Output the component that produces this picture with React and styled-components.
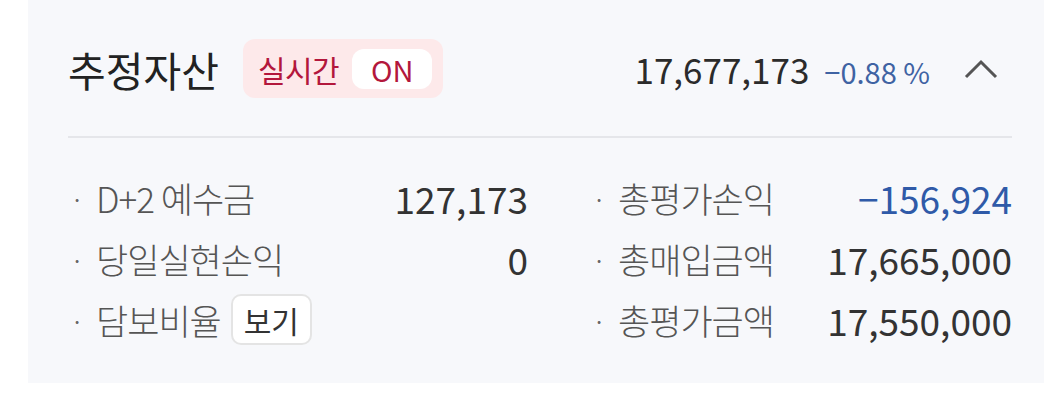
import React from "react";
import styled, { createGlobalStyle } from "styled-components";

const GlobalStyle = createGlobalStyle`
    body {
        margin: 0;
        background: #ffffff;
        font-family: "Noto Sans CJK KR", "Noto Sans", sans-serif;
    }
`;

const Panel = styled.section`
    margin-left: 28px;
    width: 1016px;
    height: 383px;
    box-sizing: border-box;
    padding: 39px 32px 0 40px;
    background: #f7f8fb;
`;

const Header = styled.div`
    display: flex;
    align-items: center;
    height: 59px;
`;

const Title = styled.h2`
    margin: 0 24px 0 0;
    font-size: 41px;
    font-weight: 400;
    color: #222222;
    letter-spacing: 0;
`;

const Badge = styled.div`
    display: flex;
    align-items: center;
    height: 59px;
    box-sizing: border-box;
    padding: 0 11px 0 15px;
    border-radius: 12px;
    background: #fde9ea;
    color: #b3173c;
    font-size: 30px;
`;

const BadgeLabel = styled.span`
    margin-right: 13px;
    letter-spacing: -0.5px;
`;

const OnPill = styled.span`
    display: flex;
    align-items: center;
    justify-content: center;
    width: 80px;
    height: 40px;
    border-radius: 12px;
    background: #ffffff;
    font-size: 29px;
`;

const Total = styled.div`
    margin-left: auto;
    display: flex;
    align-items: baseline;
    gap: 15px;
`;

const TotalValue = styled.span`
    font-size: 35px;
    color: #2b2b2b;
`;

const Rate = styled.span`
    font-size: 29px;
    color: #3f63a3;
`;

const Toggle = styled.button`
    margin-left: 34px;
    margin-right: 14px;
    padding: 0;
    border: 0;
    background: none;
    display: flex;
    align-items: center;
`;

const Divider = styled.hr`
    margin: 38px 0 29px;
    border: 0;
    height: 2px;
    background: #e5e6ea;
`;

const Grid = styled.div`
    display: grid;
    grid-template-columns: 460px 1fr;
    column-gap: 62px;
    grid-auto-rows: 61px;
`;

const Item = styled.div`
    display: flex;
    align-items: center;
`;

const Bullet = styled.span`
    width: 28px;
    padding-left: 3px;
    box-sizing: border-box;
    font-size: 22px;
    color: #666666;
`;

const Label = styled.span`
    font-size: 35px;
    font-weight: 300;
    color: #555555;
    letter-spacing: -1px;
`;

const Value = styled.span`
    margin-left: auto;
    font-size: 37px;
    color: ${(p) => (p.$negative ? "#2f5aa8" : "#333333")};
`;

const ViewButton = styled.button`
    margin-left: 10px;
    width: 81px;
    height: 51px;
    box-sizing: border-box;
    border: 2px solid #e4e4e4;
    border-radius: 10px;
    background: #ffffff;
    font-family: inherit;
    font-size: 30px;
    color: #333333;
    padding: 0;
`;

const rows = [
    [{ label: "D+2 예수금", value: "127,173" }, { label: "총평가손익", value: "−156,924", negative: true }],
    [{ label: "당일실현손익", value: "0" }, { label: "총매입금액", value: "17,665,000" }],
    [{ label: "담보비율", button: "보기" }, { label: "총평가금액", value: "17,550,000" }],
];

export default function App() {
    return (
        <>
            <GlobalStyle />
            <Panel>
                <Header>
                    <Title>추정자산</Title>
                    <Badge>
                        <BadgeLabel>실시간</BadgeLabel>
                        <OnPill>ON</OnPill>
                    </Badge>
                    <Total>
                        <TotalValue>17,677,173</TotalValue>
                        <Rate>−0.88 %</Rate>
                    </Total>
                    <Toggle aria-label="접기">
                        <svg width="34" height="20" viewBox="0 0 34 20">
                            <path d="M2 18 L17 3 L32 18" fill="none" stroke="#555" strokeWidth="3" />
                        </svg>
                    </Toggle>
                </Header>
                <Divider />
                <Grid>
                    {rows.flat().map((item, idx) => (
                        <Item key={idx}>
                            <Bullet>·</Bullet>
                            <Label>{item.label}</Label>
                            {item.button && <ViewButton>{item.button}</ViewButton>}
                            {item.value && <Value $negative={item.negative}>{item.value}</Value>}
                        </Item>
                    ))}
                </Grid>
            </Panel>
        </>
    );
}
